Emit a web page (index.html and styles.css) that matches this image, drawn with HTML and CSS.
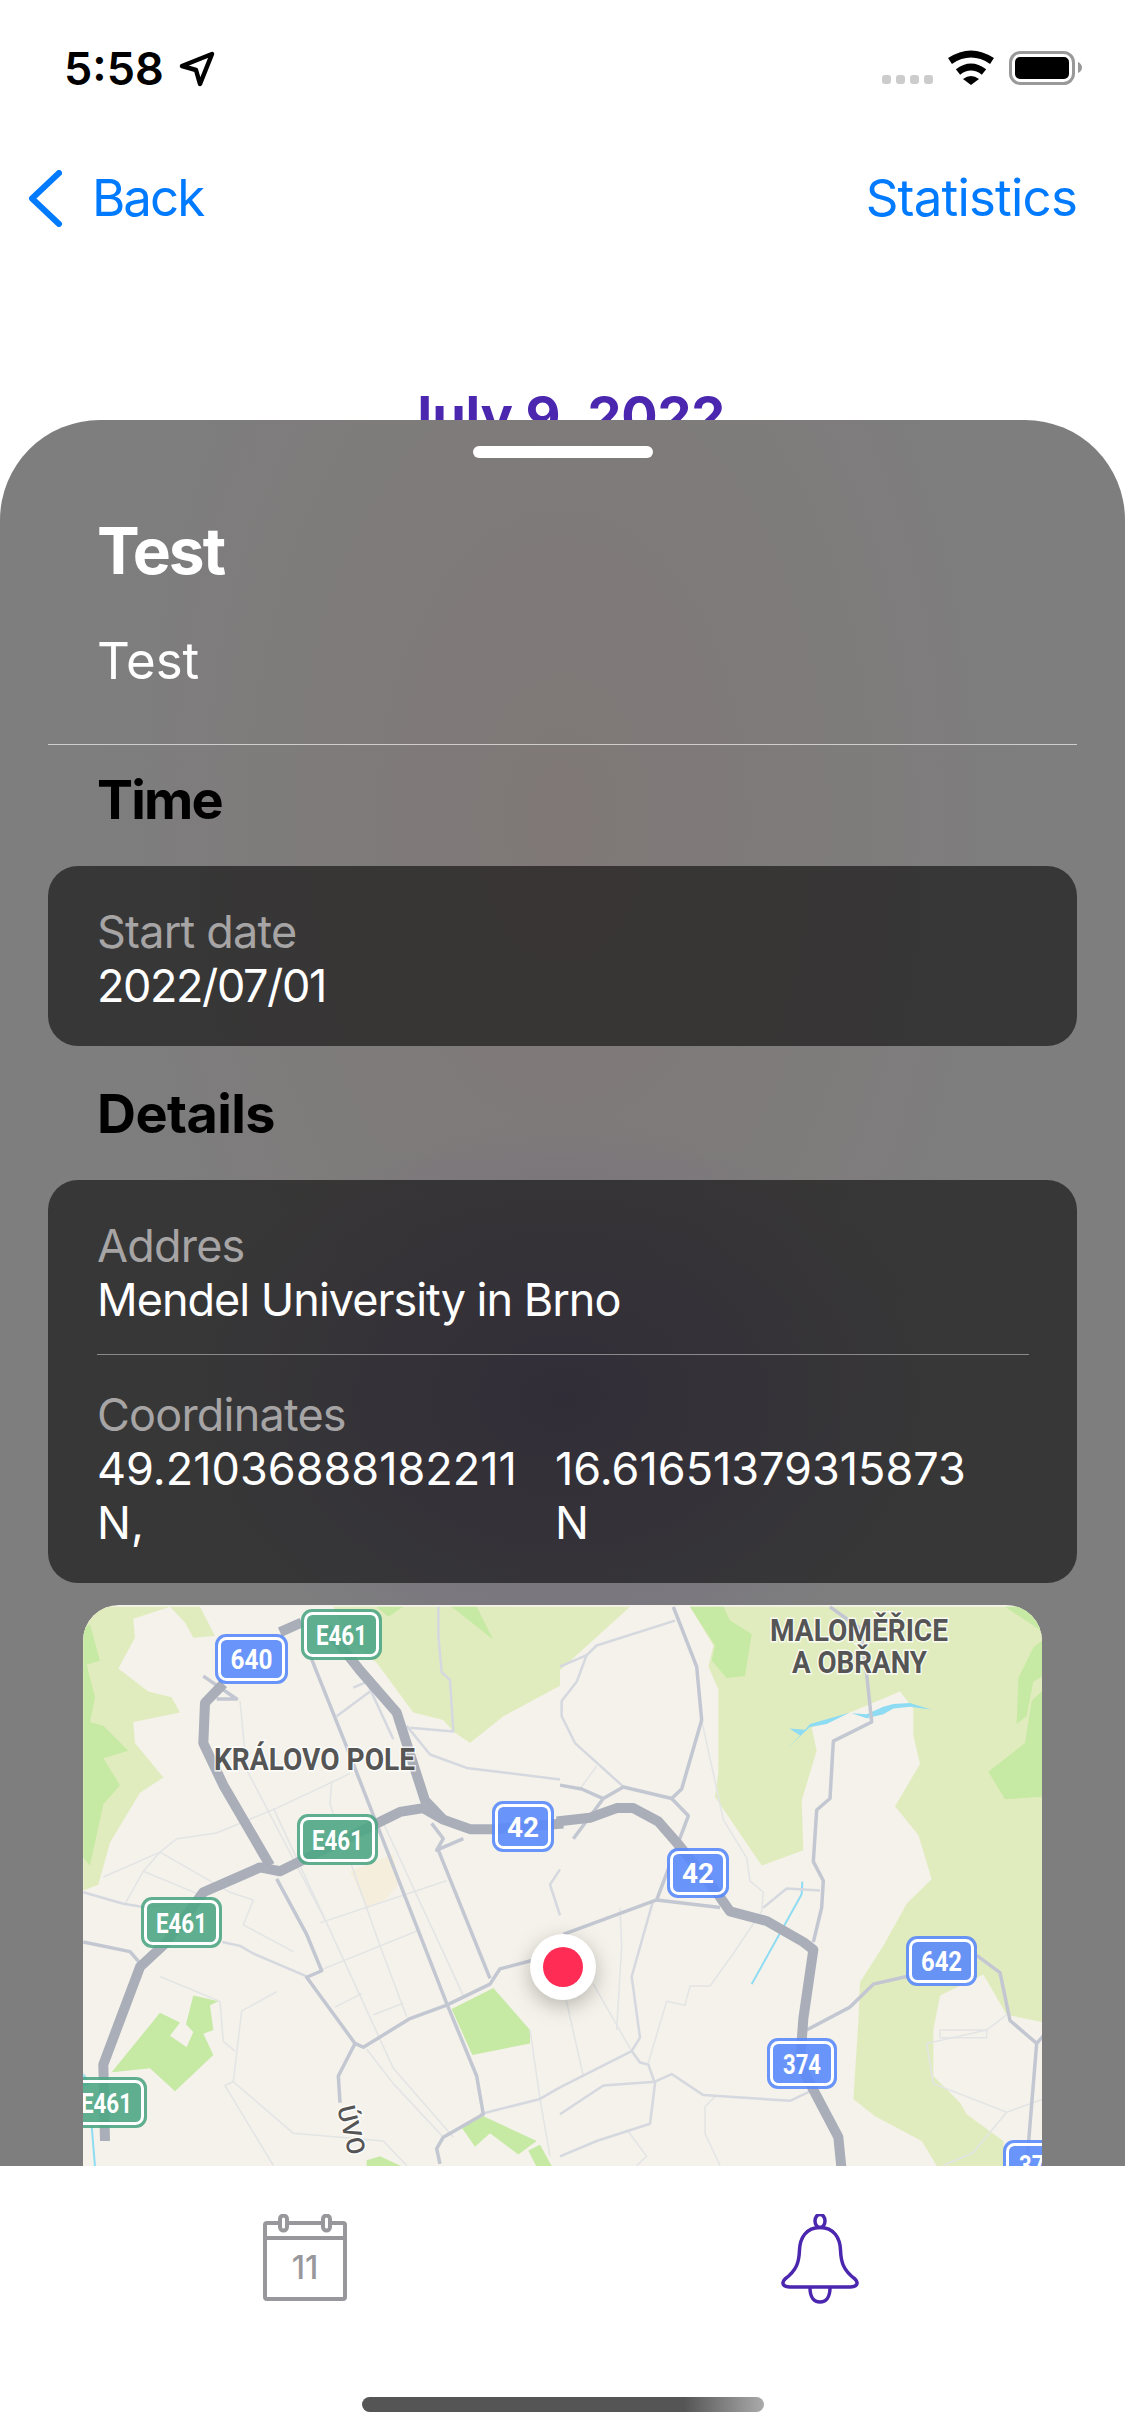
FILE: index.html
```html
<!DOCTYPE html>
<html lang="en">

<head>
  <meta charset="UTF-8">
  <meta name="viewport" content="width=device-width, initial-scale=1.0">
  <title>Event detail</title>
  <link rel="stylesheet" href="styles.css">
</head>

<body>
  <div class="screen">

    <div class="status-bar">
      <div class="status-left">
        <span class="time">5:58</span>
        <svg class="arrow" width="36" height="36" viewBox="0 0 36 36">
          <path d="M3 15 L33 3 L21 33 L17 19 Z" />
        </svg>
      </div>
      <svg class="status-right" width="200" height="40" viewBox="882 50 200 40">
        <g class="dots">
          <rect x="882" y="76" width="9" height="9" rx="3" />
          <rect x="896" y="76" width="9" height="9" rx="3" />
          <rect x="910" y="76" width="9" height="9" rx="3" />
          <rect x="924" y="76" width="9" height="9" rx="3" />
        </g>
        <path class="wifi-arc" d="M950 62 Q971 48 992 62" />
        <path class="wifi-arc" d="M958 73 Q971 63 984 73" />
        <path class="wifi-dot" d="M963 80 Q971 74 979 80 L971 86 Z" />
        <rect class="batt-shell" x="1010.5" y="53.5" width="63" height="31" rx="10" />
        <rect class="batt-fill" x="1015" y="58" width="54" height="22" rx="5" />
        <path class="batt-nub" d="M1078 63 Q1082 65 1082 68.500 Q1082 72 1078 74 Z" />
      </svg>
    </div>

    <div class="nav">
      <a class="nav-back">
        <svg class="chevron" width="33" height="57" viewBox="0 0 33 57">
          <path d="M30 3 L3 28.500 L30 54" />
        </svg>
        <span>Back</span>
      </a>
      <a class="nav-link">Statistics</a>
    </div>

    <h1 class="date">July 9, 2022</h1>

    <!-- sheet sits on top of the calendar page -->
    <div class="sheet">
      <div class="handle"></div>
      <h2 class="sheet-title">Test</h2>
      <p class="sheet-desc">Test</p>
      <div class="rule"></div>

      <h3 class="section-title first">Time</h3>
      <div class="card">
        <div class="label">Start date</div>
        <div class="value start-value">2022/07/01</div>
      </div>

      <h3 class="section-title">Details</h3>
      <div class="card">
        <div class="label">Addres</div>
        <div class="value">Mendel University in Brno</div>
        <div class="card-rule"></div>
        <div class="label">Coordinates</div>
        <div class="coords">
          <div class="value">49.21036888182211 N,</div>
          <div class="value">16.61651379315873 N</div>
        </div>
      </div>

      <div class="map">
        <svg width="960" height="600" viewBox="83 1605 960 600">
          <rect class="land" x="83" y="1605" width="960" height="600" />

          <!-- left half of the map -->
          <g transform="translate(60 1590) scale(.33333 .38265)">
            <path class="g1" d="M70 44 L330 44 L220 75 L225 125 L175 205 L265 265 L335 280 L360 320 L220 345 L225 400 L310 490 L240 530 L150 660 L115 770 L70 785 Z" />
            <path class="g1" d="M330 44 L420 44 L465 120 L400 125 L375 85 Z" />
            <path class="g1" d="M820 44 L1500 44 L1500 250 L1330 330 L1230 400 L1180 370 L1150 340 L1060 320 L950 190 L880 140 Z" />
            <path class="g2" d="M70 100 L90 90 L120 185 L80 195 L105 280 L90 345 L130 355 L205 420 L130 440 L180 510 L130 560 L90 720 L70 700 Z" />
            <path class="g2" d="M1175 44 L1250 44 L1300 130 Z" />
            <path class="g2" d="M950 44 L1030 44 L985 70 Z" />
            <path class="g2" d="M400 1060 L475 1075 L450 1085 L460 1150 L430 1160 L460 1215 L345 1310 L270 1250 L155 1260 L300 1105 L360 1130 L330 1165 L380 1195 L400 1155 L378 1135 Z" />
            <path class="g2" d="M1300 1040 L1410 1150 L1410 1185 L1237 1215 L1175 1095 Z" />
            <path class="g2" d="M1205 1405 L1270 1375 L1430 1440 L1375 1475 L1290 1420 L1245 1455 Z" />
            <path class="g2" d="M1405 1465 L1440 1450 L1510 1560 L1460 1560 Z" />
            <path class="g2" d="M920 1490 L960 1480 L1060 1520 L920 1530 Z" />
            <path class="beige" d="M870 735 L1000 690 L1015 770 L975 810 L920 830 Z" />
            <path class="water-fill" d="M70 1262 L95 1290 L70 1300 Z" />
            <path class="water-line" d="M95 1400 L110 1560" />

            <path class="r-thin" d="M130 750 L300 685 L350 650 L470 635 L650 570 L870 480" />
            <path class="r-thin" d="M195 820 L250 735 L300 685 L510 790 L580 810 L550 875 L700 945" />
            <path class="r-thin" d="M250 735 L430 800" />
            <path class="r-thin" d="M640 570 L800 870 L1000 1250 L1180 1430" />
            <path class="r-thin" d="M540 290 L560 470 L800 870" />
            <path class="r-thin" d="M780 870 L1160 760" />
            <path class="r-thin" d="M790 990 L1075 890" />
            <path class="r-thin" d="M825 1090 L905 1055" />
            <path class="r-thin" d="M940 1110 L1030 1080" />
            <path class="r-thin" d="M815 500 L810 560 L960 930 L1040 1115" />
            <path class="r-thin" d="M960 590 L1210 1060" />
            <path class="r-thin" d="M650 1050 L545 1100 L520 1285 L495 1295 L640 1504" />
            <path class="r-thin" d="M520 1285 L700 1420 L970 1440 L1040 1504" />
            <path class="r-thin" d="M300 1010 L480 1075 L490 1180 L525 1205" />
            <path class="r-thin" d="M1410 1150 L1440 1330 L1470 1480" />
            <path class="r-thin" d="M920 1200 L1000 1290 L1150 1430" />

            <path class="r-minor" d="M70 790 L190 820 L260 830 L400 810" />
            <path class="r-minor" d="M487 920 L540 930 L580 950 L740 1010" />
            <path class="r-minor" d="M1040 355 L1110 430 L1220 465 L1500 495" />
            <path class="r-minor" d="M1135 44 L1135 120 L1145 215 L1170 235 L1180 370 L1050 360" />
            <path class="r-minor" d="M880 255 L920 240 L1000 390" />
            <path class="r-minor" d="M830 330 L930 265" />
            <path class="r-minor" d="M1260 1370 L1440 1330 L1500 1300" />
            <path class="r-minor" d="M1500 730 L1470 770 L1500 850" />

            <path class="r-main" d="M750 170 L860 410 L1160 1080 L1250 1270 L1270 1370 L1150 1430 L1130 1460 L1140 1500" />
            <path class="r-main" d="M650 755 L740 900 L785 995 L740 1012 L885 1185 L910 1195 L1050 1120 L1160 1085 L1290 1030 L1320 990 L1430 965" />
            <path class="r-main" d="M885 1185 L835 1270 L840 1340" />
            <path class="r-main" d="M1135 680 L1290 1015" />
            <path class="r-main" d="M1115 610 L1150 650 L1130 680 L1210 650" />
            <path class="r-main" d="M70 920 L210 945 L240 975" />
            <path class="r-main" d="M430 225 L530 285 L470 285" />

            <path class="r-motor" d="M490 245 L435 295 L430 400 L490 510 L610 690 L630 720" />
            <path class="r-motor" d="M660 110 L725 85" />
            <path class="r-motor" d="M135 1440 L130 1240 L240 985 L320 920 L430 790 L600 725 L660 735 L730 705 L950 610 L1020 580 L1090 570 L1150 600 L1230 625 L1300 625 L1510 610" />
            <path class="r-motor" d="M800 100 L900 210 L1010 320 L1095 550 L1150 600" />
          </g>

          <!-- right half of the map -->
          <g transform="translate(560 1590) scale(.33333 .38265)">
            <path class="g1" d="M0 44 L210 44 L0 210 Z" />
            <path class="g1" d="M390 44 L1450 44 L1450 1600 L1130 1600 L1130 1504 L1085 1440 L945 1375 L880 1330 L895 1130 L900 1025 L970 930 L1040 820 L1115 755 L1075 640 L1005 565 L1080 455 L1060 380 L1060 310 L1020 265 L870 320 L755 360 L770 420 L725 550 L730 680 L605 720 L465 540 L475 480 L475 260 L445 200 L460 145 Z" />
            <path class="land" d="M1270 1005 L1340 1110 L1450 1130 L1450 1600 L1340 1600 L1330 1440 L1220 1370 L1200 1340 L1120 1270 L1120 1150 L1140 1060 Z" />
            <path class="g2" d="M390 44 L490 44 L510 80 L575 115 L555 225 L500 230 L455 185 L465 145 Z" />
            <path class="g2" d="M1335 44 L1390 44 L1450 44 L1450 110 Z" />
            <path class="g2" d="M1420 150 L1450 130 L1450 225 L1420 240 L1400 330 L1370 350 L1375 230 Z" />
            <path class="g2" d="M1285 475 L1395 400 L1415 290 L1450 260 L1450 540 L1335 547 Z" />
            <path class="water-fill" d="M680 415 L720 380 L688 362 L735 365 L750 350 L870 320 L800 350 L750 358 Z" />
            <path class="water-fill" d="M875 322 L920 325 L970 305 L1000 298 L1050 295 L1115 313 L1050 305 L1000 310 L970 325 L920 335 Z" />
            <path class="water-line" d="M727 762 L725 795 L575 1030" />

            <path class="r-thin" d="M425 340 L490 600 L560 700 L570 760 L610 790 L605 840 L520 950 L450 1035 L390 1035 L375 1085 L320 1075 L265 1235" />
            <path class="r-thin" d="M1140 1150 L1280 1150 L1280 1170 L1140 1170 Z" />
            <path class="r-thin" d="M1100 1185 L1120 1290 L1340 1365 L1450 1330" />
            <path class="r-thin" d="M1100 1185 L1280 1150 L1340 1110" />
            <path class="r-thin" d="M1340 1365 L1240 1470 L1150 1504" />
            <path class="r-thin" d="M180 830 L185 930 L170 1150" />
            <path class="r-thin" d="M0 1000 L70 1270" />
            <path class="r-thin" d="M100 1030 L215 1205" />
            <path class="r-thin" d="M435 1350 L470 1320 M435 1350 L435 1420 L480 1504" />
            <path class="r-thin" d="M110 460 L60 520" />
            <path class="r-thin" d="M205 1415 L260 1480 L230 1504" />

            <path class="r-minor" d="M0 200 L80 170 L110 145 L345 80" />
            <path class="r-minor" d="M80 170 L50 240 L5 290 L5 330 L45 400 L185 510 L190 515" />
            <path class="r-minor" d="M0 1480 L110 1440 L270 1395 L285 1290 L265 1240 L240 1235 L215 1205 L240 1170 L215 1010 L280 810" />
            <path class="r-minor" d="M0 1300 L215 1205" />
            <path class="r-minor" d="M0 1370 L130 1295 L285 1285 L335 1265 L430 1320 L690 1335 L750 1310" />
            <path class="r-minor" d="M610 830 L680 780 L780 785" />

            <path class="r-main" d="M340 44 L410 200 L425 340 L365 520 L335 545 L190 515 L130 545 L40 650" />
            <path class="r-main" d="M0 510 L65 520 L130 545" />
            <path class="r-main" d="M335 545 L385 590 L290 810 L10 900" />
            <path class="r-main" d="M290 810 L480 830" />
            <path class="r-main" d="M810 44 L900 100 L920 220 L935 345 L820 395 L810 545 L770 575 L760 710 L790 760 L785 830 L760 920" />
            <path class="r-main" d="M740 1150 L870 1090 L940 1030 L1040 1010" />
            <path class="r-main" d="M1250 955 L1320 1000 L1350 1125 L1430 1185 L1400 1504" />
            <path class="r-main" d="M1430 1185 L1450 1165" />

            <path class="r-motor" d="M-10 605 L90 595 L170 570 L220 570 L295 605 L360 670 L470 790 L510 840 L620 865 L730 920 L760 940 L730 1120 L720 1240 L835 1430 L850 1560" />
          </g>

          <g class="place">
            <text x="214" y="1770" textLength="201" lengthAdjust="spacingAndGlyphs">KRÁLOVO POLE</text>
            <text x="770" y="1641" textLength="178" lengthAdjust="spacingAndGlyphs">MALOMĚŘICE</text>
            <text x="792" y="1673" textLength="135" lengthAdjust="spacingAndGlyphs">A OBŘANY</text>
            <text class="street" transform="translate(337 2108) rotate(76)">ÚVO</text>
          </g>

          <g class="badge green">
            <rect class="badge-bg" x="301" y="1609" width="81" height="51" rx="11" />
            <rect class="badge-ring" x="305.500" y="1613.500" width="72" height="42" rx="7" />
            <text x="341.500" y="1645" textLength="51" lengthAdjust="spacingAndGlyphs">E461</text>
          </g>
          <g class="badge green">
            <rect class="badge-bg" x="297" y="1814" width="81" height="51" rx="11" />
            <rect class="badge-ring" x="301.500" y="1818.500" width="72" height="42" rx="7" />
            <text x="337.500" y="1850" textLength="51" lengthAdjust="spacingAndGlyphs">E461</text>
          </g>
          <g class="badge green">
            <rect class="badge-bg" x="141" y="1897" width="81" height="51" rx="11" />
            <rect class="badge-ring" x="145.500" y="1901.500" width="72" height="42" rx="7" />
            <text x="181.500" y="1933" textLength="51" lengthAdjust="spacingAndGlyphs">E461</text>
          </g>
          <g class="badge green">
            <rect class="badge-bg" x="66" y="2077" width="81" height="51" rx="11" />
            <rect class="badge-ring" x="70.500" y="2081.500" width="72" height="42" rx="7" />
            <text x="106.500" y="2113" textLength="51" lengthAdjust="spacingAndGlyphs">E461</text>
          </g>
          <g class="badge blue">
            <rect class="badge-bg" x="215" y="1634" width="73" height="50" rx="11" />
            <rect class="badge-ring" x="219.500" y="1638.500" width="64" height="41" rx="7" />
            <text x="251.500" y="1669" textLength="42" lengthAdjust="spacingAndGlyphs">640</text>
          </g>
          <g class="badge blue">
            <rect class="badge-bg" x="492" y="1801" width="62" height="51" rx="11" />
            <rect class="badge-ring" x="496.500" y="1805.500" width="53" height="42" rx="7" />
            <text x="523" y="1837" textLength="32" lengthAdjust="spacingAndGlyphs">42</text>
          </g>
          <g class="badge blue">
            <rect class="badge-bg" x="667" y="1848" width="62" height="50" rx="11" />
            <rect class="badge-ring" x="671.500" y="1852.500" width="53" height="41" rx="7" />
            <text x="698" y="1883" textLength="32" lengthAdjust="spacingAndGlyphs">42</text>
          </g>
          <g class="badge blue">
            <rect class="badge-bg" x="906" y="1936" width="71" height="50" rx="11" />
            <rect class="badge-ring" x="910.500" y="1940.500" width="62" height="41" rx="7" />
            <text x="941.500" y="1971" textLength="41" lengthAdjust="spacingAndGlyphs">642</text>
          </g>
          <g class="badge blue">
            <rect class="badge-bg" x="767" y="2038" width="70" height="51" rx="11" />
            <rect class="badge-ring" x="771.500" y="2042.500" width="61" height="42" rx="7" />
            <text x="802" y="2074" textLength="38" lengthAdjust="spacingAndGlyphs">374</text>
          </g>
          <g class="badge blue">
            <rect class="badge-bg" x="1003" y="2140" width="70" height="50" rx="11" />
            <rect class="badge-ring" x="1007.500" y="2144.500" width="61" height="41" rx="7" />
            <text x="1038" y="2175" textLength="38" lengthAdjust="spacingAndGlyphs">374</text>
          </g>

          <g class="pin">
            <circle class="pin-outer" cx="563" cy="1967" r="33" />
            <circle class="pin-inner" cx="563" cy="1967" r="20" />
          </g>
        </svg>
      </div>
    </div>

    <div class="spacer"></div>

    <div class="tab-bar">
      <div class="tabs">
        <svg class="tab-icon calendar" width="84" height="89" viewBox="263 2214 84 89">
          <rect class="cal-body" x="265" y="2223" width="80" height="76" rx="2" />
          <path class="cal-body" d="M265 2238 L345 2238" />
          <rect class="cal-ring" x="280" y="2215.500" width="7" height="15" rx="3.500" />
          <rect class="cal-ring" x="323" y="2215.500" width="7" height="15" rx="3.500" />
          <text x="305" y="2279">11</text>
        </svg>
        <svg class="tab-icon bell" width="78" height="90" viewBox="781 2214 78 90">
          <ellipse cx="820" cy="2221" rx="5" ry="6.500" />
          <path d="M820 2227.500 C806 2227.500 800 2238 799.500 2250 C799 2262 797 2270 785 2279 C781 2283 783 2287 790 2287 L850 2287 C857 2287 859 2283 855 2279 C843 2270 841 2262 840.500 2250 C840 2238 834 2227.500 820 2227.500 Z" />
          <path d="M810 2288 C810 2297 814 2302 820 2302 C826 2302 830 2297 830 2288" />
        </svg>
      </div>
      <div class="home-indicator"></div>
    </div>

  </div>
</body>

</html>
```

FILE: styles.css
```css
* {
  box-sizing: border-box;
}

html,
body {
  margin: 0;
  padding: 0;
  background: #fff;
}

.screen {
  position: relative;
  width: 1125px;
  height: 2436px;
  display: flex;
  flex-direction: column;
  overflow: hidden;
  font-family: Inter, "Liberation Sans", sans-serif;
}

/* status bar */

.status-bar {
  height: 93px;
  padding: 45px 43px 0 64px;
  display: flex;
  align-items: center;
  justify-content: space-between;
}

.status-left {
  display: flex;
  align-items: center;
  gap: 15px;
}

.time {
  font-size: 45px;
  line-height: 48px;
  font-weight: 600;
  color: #000;
}

.arrow path {
  fill: none;
  stroke: #000;
  stroke-width: 4.5;
  stroke-linejoin: round;
}

.dots rect {
  fill: #ccc;
}

.wifi-arc {
  fill: none;
  stroke: #000;
  stroke-width: 7;
}

.wifi-dot {
  fill: #000;
}

.batt-shell {
  fill: none;
  stroke: #999;
  stroke-width: 3;
}

.batt-fill {
  fill: #000;
}

.batt-nub {
  fill: #999;
}

/* nav */

.nav {
  margin-top: 75px;
  padding: 0 48px 0 29px;
  display: flex;
  align-items: center;
  justify-content: space-between;
  font-size: 51px;
  line-height: 60px;
  color: #007aff;
}

.nav-back {
  display: flex;
  align-items: center;
  gap: 30px;
  letter-spacing: -2px;
}

.nav-link {
  letter-spacing: -0.8px;
}

.chevron path {
  fill: none;
  stroke: #007aff;
  stroke-width: 6;
  stroke-linecap: round;
  stroke-linejoin: round;
}

.date {
  margin: 156px 0 0;
  padding-right: 0;
  padding-left: 1px;
  text-align: center;
  font-size: 54px;
  line-height: 64px;
  font-weight: 700;
  letter-spacing: -0.2px;
  color: #4b26ae;
}

.spacer {
  flex: 1;
}

/* sheet */

.sheet {
  position: absolute;
  top: 420px;
  left: 0;
  right: 0;
  bottom: 270px;
  overflow: hidden;
  padding: 26px 48px 0;
  border-radius: 100px 100px 0 0;
  color: #fff;
  background-color: #7e7e7e;
  background-image:
    radial-gradient(ellipse 380px 280px at 562px 980px, #716881, rgba(113, 104, 129, 0)),
    radial-gradient(ellipse 480px 800px at 562px 400px, #7f7877, rgba(127, 120, 119, 0));
}

.handle {
  width: 180px;
  height: 12px;
  margin: 0 auto;
  border-radius: 6px;
  background: #fff;
}

.sheet-title {
  margin: 55px 0 0 49px;
  font-size: 64px;
  line-height: 76px;
  font-weight: 700;
  letter-spacing: -2px;
}

.sheet-desc {
  margin: 42px 0 0 49px;
  font-size: 51px;
  line-height: 60px;
}

.rule {
  height: 1px;
  margin-top: 53px;
  background: #cfcdcd;
}

.section-title {
  margin: 36px 0 34px 49px;
  font-size: 54px;
  line-height: 64px;
  font-weight: 700;
  letter-spacing: -0.6px;
  color: #000;
}

.section-title.first {
  margin-top: 23px;
  letter-spacing: -1.8px;
}

.card {
  padding: 39px 48px 33px 49px;
  border-radius: 30px;
  background: rgba(0, 0, 0, 0.56);
}

.label {
  font-size: 45px;
  line-height: 54px;
  letter-spacing: -0.8px;
  color: #a6a4a4;
}

.value {
  font-size: 45px;
  line-height: 54px;
  letter-spacing: -1px;
  color: #fff;
}

.start-value {
  letter-spacing: -1.4px;
}

.card-rule {
  height: 1px;
  margin: 27px 0 33px;
  background: #8a8889;
}

.coords {
  display: grid;
  grid-template-columns: 458px 430px;
}

.coords .value {
  letter-spacing: 0;
}

/* map */

.map {
  height: 600px;
  margin: 22px 35px 0;
  overflow: hidden;
  border-radius: 36px;
}

.map svg {
  display: block;
}

.map path,
.map rect {
  vector-effect: non-scaling-stroke;
}

.land {
  fill: #f4f2ea;
}

.g1 {
  fill: #e1ecbe;
}

.g2 {
  fill: #c6e9a4;
}

.beige {
  fill: #f5eedd;
}

.water-fill {
  fill: #8edcf3;
}

.water-line {
  fill: none;
  stroke: #8edcf3;
  stroke-width: 2;
}

.r-thin,
.r-minor,
.r-main,
.r-motor {
  fill: none;
  stroke-linejoin: round;
}

.r-thin {
  stroke: #e3e4e5;
  stroke-width: 1.5;
}

.r-minor {
  stroke: #d5d8df;
  stroke-width: 2.5;
}

.r-main {
  stroke: #c3c7d2;
  stroke-width: 3.5;
}

.r-motor {
  stroke: #a9aeb9;
  stroke-width: 10;
}

.place text {
  font-family: Roboto, sans-serif;
  font-size: 31px;
  font-weight: 700;
  fill: #555;
  stroke: #fff;
  stroke-width: 3px;
  stroke-opacity: 0.8;
  paint-order: stroke;
}

.place .street {
  font-size: 25px;
  font-weight: 500;
}

.badge text {
  font-family: Roboto, sans-serif;
  font-size: 28px;
  font-weight: 700;
  text-anchor: middle;
  fill: #fff;
}

.badge-bg {
  stroke-width: 0;
}

.badge-ring {
  fill: none;
  stroke: #fff;
  stroke-width: 3;
}

.green .badge-bg {
  fill: #4ea685;
  fill-opacity: 0.9;
}

.blue .badge-bg {
  fill: #5a89fb;
  fill-opacity: 0.9;
}

.pin {
  filter: drop-shadow(0 6px 10px rgba(0, 0, 0, 0.25));
}

.pin-outer {
  fill: #fff;
}

.pin-inner {
  fill: #ff2d55;
}

/* tab bar */

.tab-bar {
  height: 270px;
  padding-top: 48px;
  display: flex;
  flex-direction: column;
  background: #fff;
}

.tabs {
  height: 89px;
  padding-left: 263px;
  display: flex;
  gap: 434px;
}

.cal-body,
.cal-ring {
  stroke: #98989c;
  stroke-width: 4;
}

.cal-body {
  fill: none;
}

.cal-ring {
  fill: #fff;
}

.calendar text {
  font-size: 32px;
  font-weight: 500;
  text-anchor: middle;
  fill: #98989c;
}

.bell ellipse,
.bell path {
  fill: none;
  stroke: #4b26ae;
  stroke-width: 3.500;
}

.home-indicator {
  width: 402px;
  height: 15px;
  margin: 94px 0 0 362px;
  border-radius: 8px;
  background: linear-gradient(to right, #555 80%, #aaa);
}
```
